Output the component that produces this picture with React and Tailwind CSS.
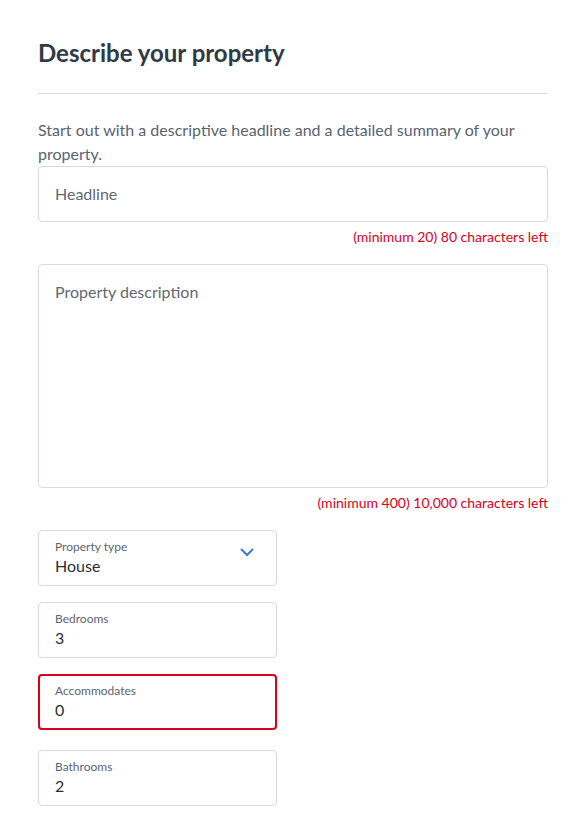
import React, { useState } from "react";

const NumberField = ({ label, value, error }) => (
    <div
        className={`w-[239px] h-[56px] rounded-[4px] bg-white px-4 flex flex-col justify-center ${
            error ? "border-2 border-[#d9001b] pl-[15px]" : "border border-[#d6dae0]"
        }`}
    >
        <span className="text-[12px] leading-[16px] text-[#5c6570]">{label}</span>
        <span className="text-[16px] leading-[22px] text-[#2b2f33]">{value}</span>
    </div>
);

const App = () => {
    const [headline] = useState("");
    const [description] = useState("");

    return (
        <div
            className="w-[586px] min-h-[837px] bg-white px-[38px] pt-[37px]"
            style={{ fontFamily: "Lato, 'Open Sans', sans-serif" }}
        >
            {/* Title */}
            <h1 className="text-[24px] leading-[32px] font-bold text-[#2f3a46]">
                Describe your property
            </h1>
            <div className="mt-[24px] h-px bg-[#dadde1]" />

            <p className="mt-6 text-[16px] leading-[24px] text-[#5a6470]">
                Start out with a descriptive headline and a detailed summary of your property.
            </p>

            {/* Headline */}
            <div className="h-[56px] rounded-[4px] border border-[#d6dae0] px-4 flex items-center">
                <span className="text-[16px] text-[#5f6873]">{headline || "Headline"}</span>
            </div>
            <p className="mt-[5px] text-right text-[14px] leading-[20px] text-[#d9001b]">
                (minimum 20) 80 characters left
            </p>

            {/* Description */}
            <div className="mt-[17px] h-[224px] rounded-[4px] border border-[#d6dae0] px-4 pt-[15px]">
                <span className="text-[16px] leading-[24px] text-[#5f6873]">
                    {description || "Property description"}
                </span>
            </div>
            <p className="mt-[5px] text-right text-[14px] leading-[20px] text-[#d9001b]">
                (minimum 400) 10,000 characters left
            </p>

            {/* Details */}
            <div className="mt-[17px] flex flex-col">
                <div className="w-[239px] h-[56px] rounded-[4px] border border-[#d6dae0] px-4 flex items-center justify-between">
                    <div className="flex flex-col">
                        <span className="text-[12px] leading-[16px] text-[#5c6570]">Property type</span>
                        <span className="text-[16px] leading-[22px] text-[#2b2f33]">House</span>
                    </div>
                    <svg width="16" height="10" viewBox="0 0 16 10" className="mr-[5px] mb-[12px]">
                        <path d="M2 2l6 6 6-6" fill="none" stroke="#3b78d8" strokeWidth="2" />
                    </svg>
                </div>
                <div className="mt-4">
                    <NumberField label="Bedrooms" value="3" />
                </div>
                <div className="mt-4">
                    <NumberField label="Accommodates" value="0" error />
                </div>
                <div className="mt-5">
                    <NumberField label="Bathrooms" value="2" />
                </div>
            </div>
        </div>
    );
};

export default App;
